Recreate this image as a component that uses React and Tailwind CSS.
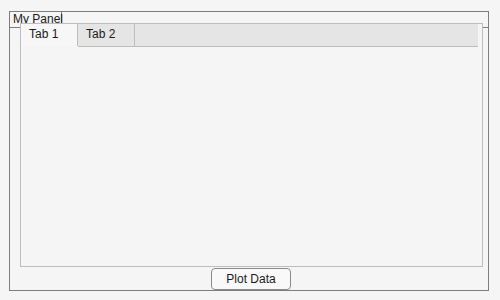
import React, { useState } from "react";

const App = () => {
  const [tab, setTab] = useState(0);
  const tabs = ["Tab 1", "Tab 2"];

  return (
    <div
      className="w-[500px] h-[300px] bg-[#f5f5f5] pt-[11px] pl-[9px] text-[12px] text-[#1a1a1a]"
      style={{ fontFamily: '"Liberation Sans", Arial, sans-serif' }}
    >
      {/* outer panel */}
      <div className="w-[480px] h-[280px] border border-[#7d7d7d] flex flex-col">
        <div className="h-[16px] border-b border-[#7d7d7d] shrink-0">
          <div className="w-[52px] h-[11px] border-r border-[#7d7d7d] pl-[3px] leading-[14px] whitespace-nowrap">
            My Panel
          </div>
        </div>

        {/* tab group */}
        <div className="mt-[-5px] ml-[10px] w-[463px] h-[244px] border border-[#bdbdbd] bg-[#f5f5f5] flex flex-col shrink-0">
          <div className="flex h-[22px] shrink-0">
            {tabs.map((t, i) => (
              <div
                key={t}
                onClick={() => setTab(i)}
                className={
                  i === tab
                    ? "w-[57px] h-[22px] bg-[#f7f7f7] border-r border-[#bdbdbd] pl-[8px] pt-[2px] leading-[16px] cursor-default"
                    : "w-[57px] h-[23px] bg-[#e5e5e5] border-r border-b border-[#bdbdbd] pl-[8px] pt-[2px] leading-[16px] cursor-default"
                }
              >
                {t}
              </div>
            ))}
            <div className="w-[343px] h-[23px] bg-[#e5e5e5] border-b border-[#bdbdbd]"></div>
          </div>
          <div className="flex-1"></div>
        </div>

        <button className="mt-[1px] ml-[201px] w-[80px] h-[22px] border border-[#8a8a8a] rounded-[4px] bg-[#f9f9f9] text-[12px] leading-[14px] text-[#1a1a1a] shrink-0">
          Plot Data
        </button>
      </div>
    </div>
  );
};

export default App;
